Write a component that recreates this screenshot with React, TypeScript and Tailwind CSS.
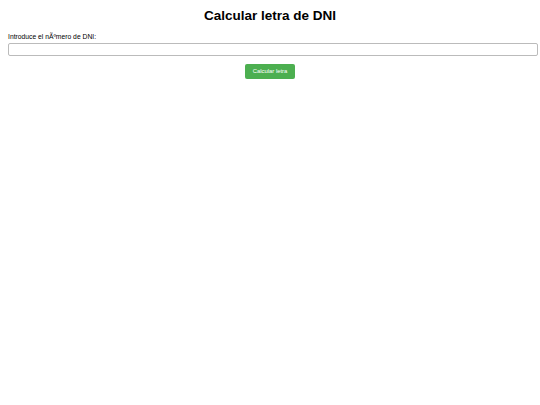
export default function App() {
  return (
    <div className="min-h-[405px] bg-white px-[8px] pt-[8px] font-['Liberation_Sans',Arial,sans-serif] text-black">
      <h1 className="text-center text-[13.5px] font-bold leading-[16px]">Calcular letra de DNI</h1>
      <div className="mt-[9px]">
        <label htmlFor="dni" className="block text-[6.75px] leading-[8px]">
          Introduce el nÃºmero de DNI:
        </label>
        <input
          id="dni"
          type="text"
          className="mt-[2px] block h-[13px] w-[530px] rounded-[2px] border border-[#bbbbbb] bg-white outline-none"
        />
      </div>
      <div className="mt-[8px] flex justify-center">
        <button className="h-[15px] w-[50px] rounded-[2px] bg-[#4caf50] text-[5.9px] leading-[15px] text-white">
          Calcular letra
        </button>
      </div>
    </div>
  );
}
